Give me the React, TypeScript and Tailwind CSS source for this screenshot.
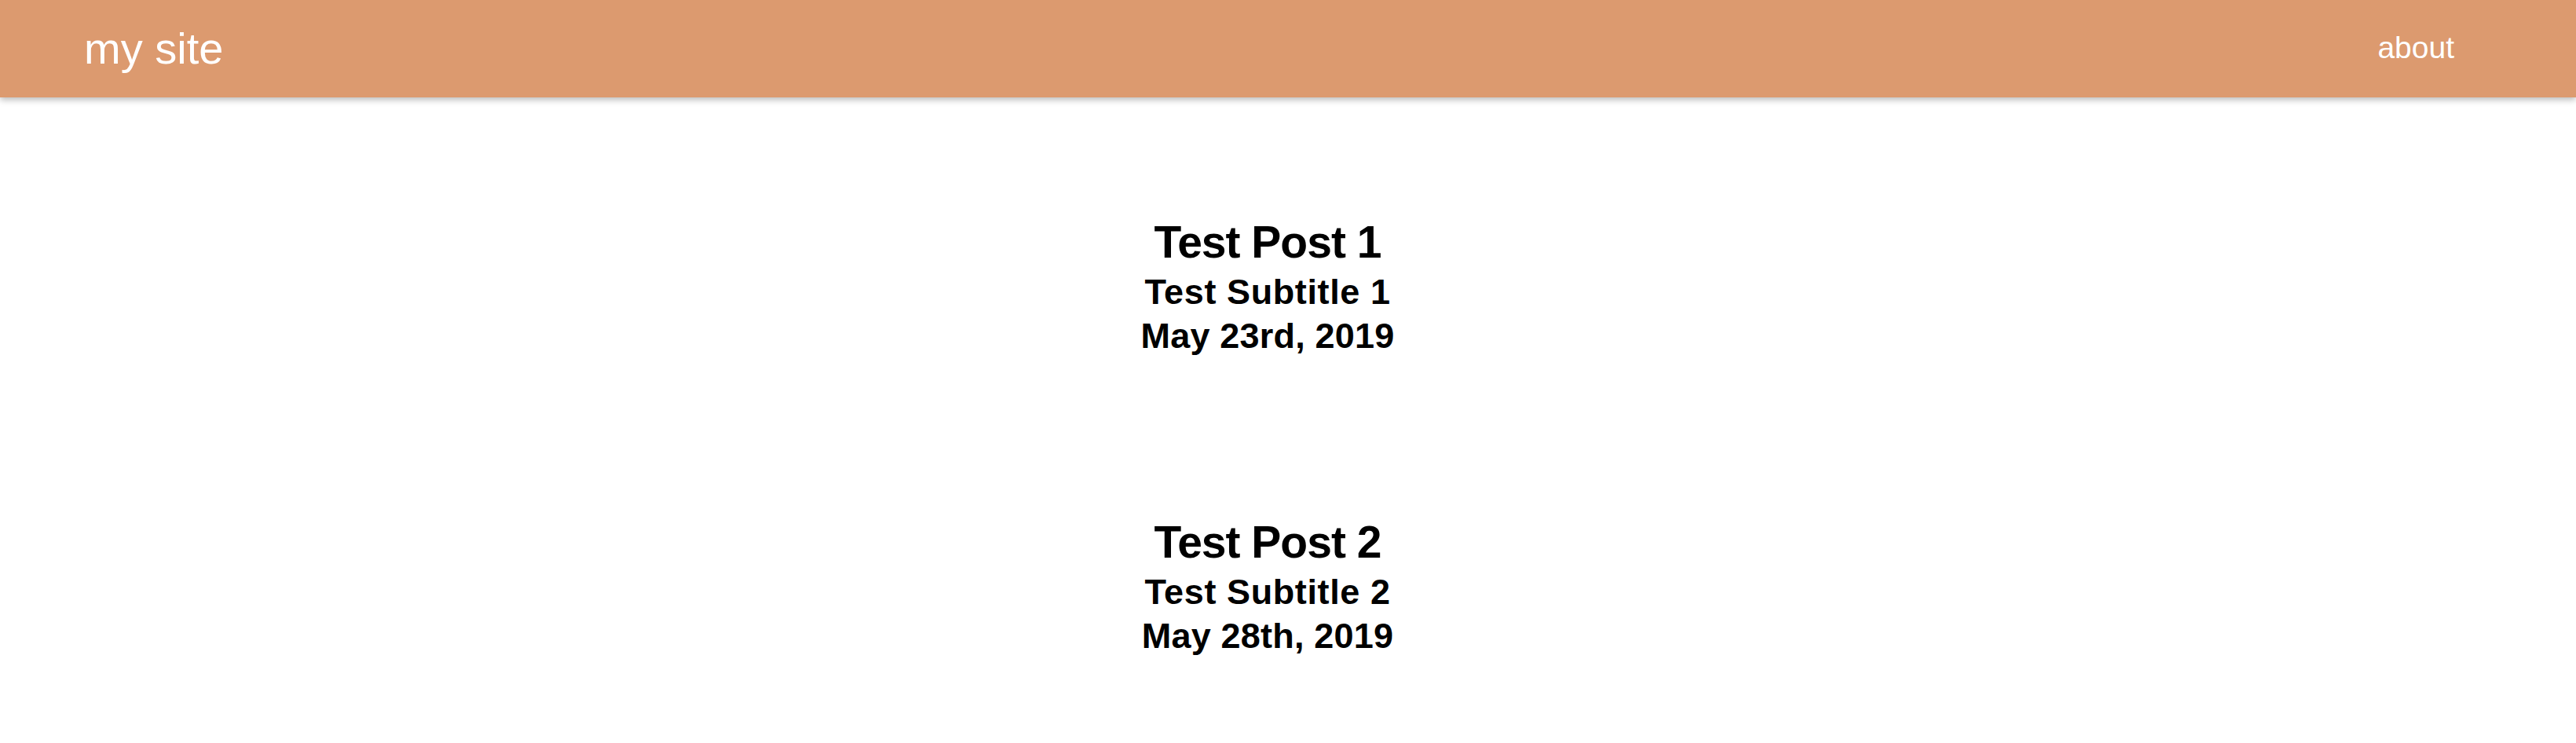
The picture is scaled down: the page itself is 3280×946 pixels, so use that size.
import React from "react";

const posts = [
  { title: "Test Post 1", subtitle: "Test Subtitle 1", date: "May 23rd, 2019" },
  { title: "Test Post 2", subtitle: "Test Subtitle 2", date: "May 28th, 2019" },
];

export default function App() {
  return (
    <div className="min-h-screen bg-white" style={{ fontFamily: '"Liberation Sans", Arial, sans-serif' }}>
      <header className="relative z-10 flex h-[124px] items-center justify-between bg-[#dc9a6f] pl-[107px] pr-[155px] shadow-[0_3px_8px_rgba(0,0,0,0.28)]">
        <a className="text-[56px] leading-none text-white">my site</a>
        <a className="mb-[4px] text-[39px] leading-none text-white">about</a>
      </header>
      <main className="flex flex-col items-center gap-[202px] pt-[152px] pr-[52px] text-black">
        {posts.map((p) => (
          <div key={p.title} className="flex flex-col items-center font-bold">
            <h1 className="h-[68px] text-[57px] leading-[64px] tracking-[-1px]">{p.title}</h1>
            <h2 className="h-[56px] text-[45px] leading-[56px] tracking-[0.6px]">{p.subtitle}</h2>
            <h3 className="h-[56px] text-[45px] leading-[56px] tracking-[0.2px]">{p.date}</h3>
          </div>
        ))}
      </main>
    </div>
  );
}
